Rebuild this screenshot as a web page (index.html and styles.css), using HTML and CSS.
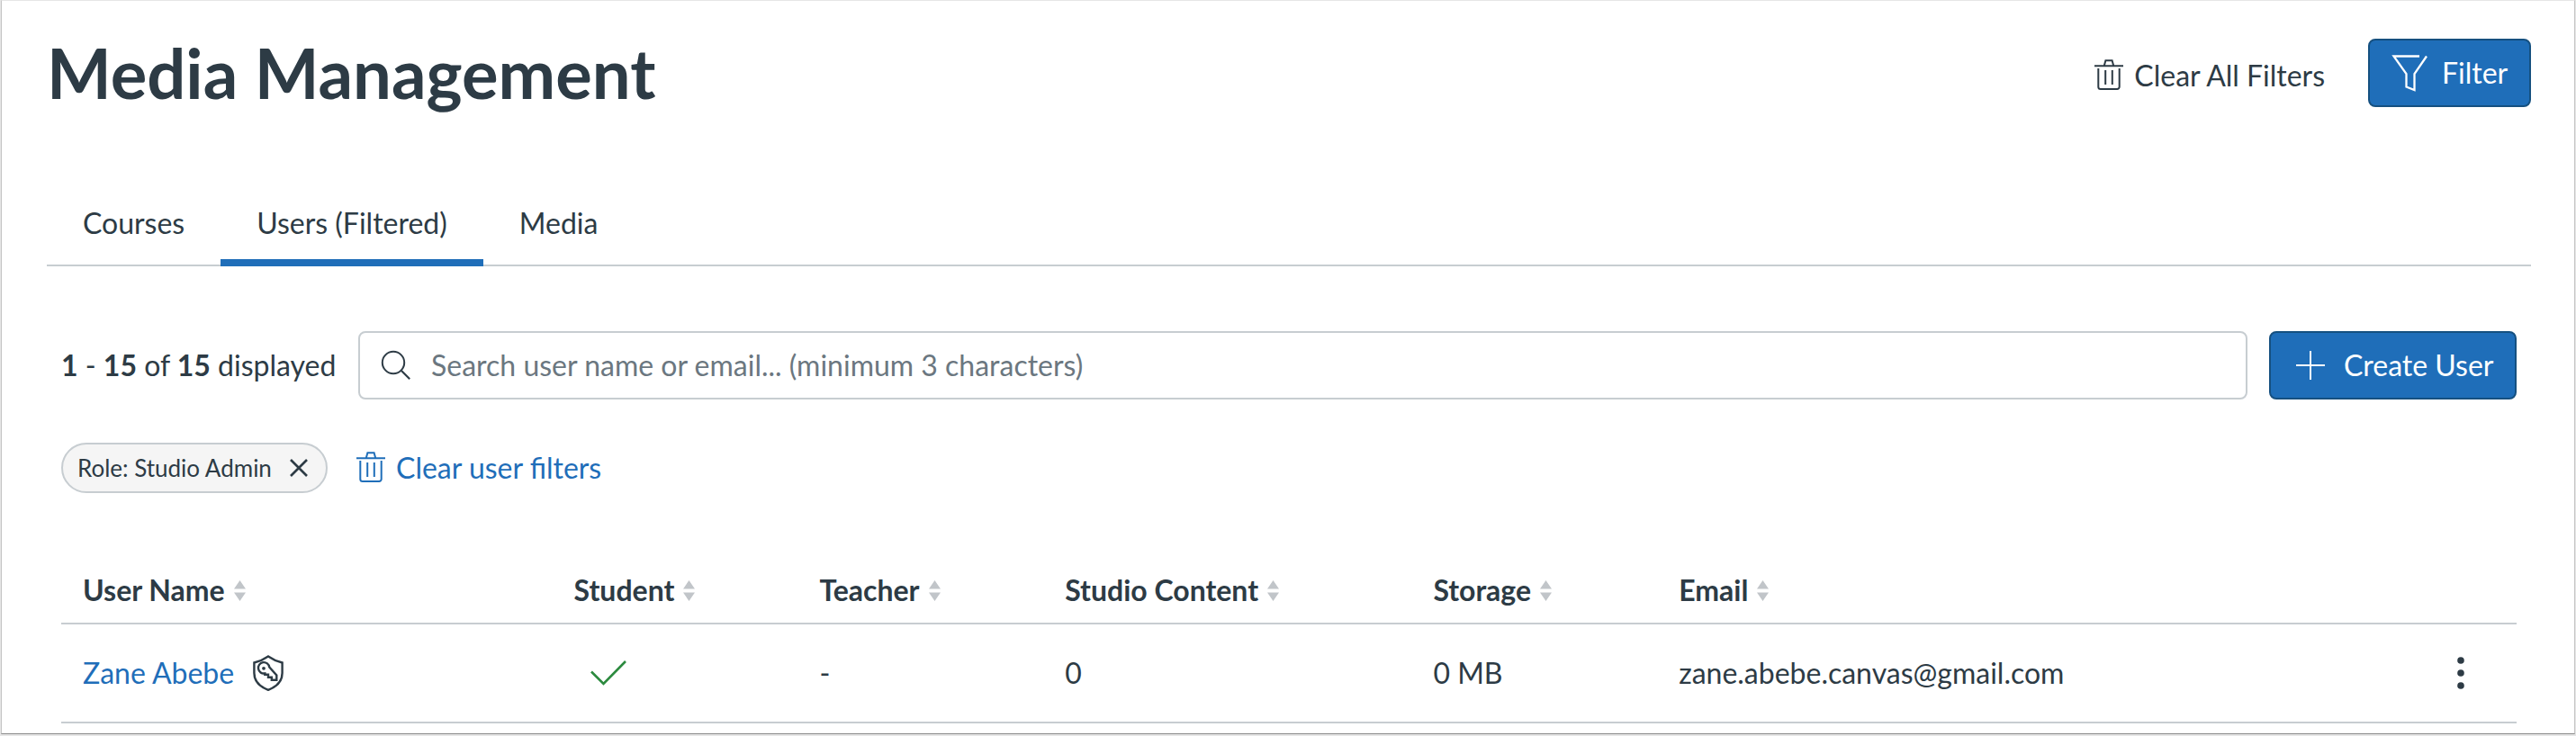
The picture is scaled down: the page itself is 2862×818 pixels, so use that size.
FILE: index.html
```
<!DOCTYPE html>
<html lang="en">
<head>
    <meta charset="UTF-8">
    <title>Media Management</title>
    <link rel="stylesheet" href="styles.css">
</head>
<body>
    <!-- shared icons -->
    <svg class="sprite">
        <symbol id="icon-trash" viewBox="0 0 32 34">
            <path d="M0 7.2h32M10.8 7l1.6-5.8h7.2L21.2 7M4.3 10v20.5a2.5 2.5 0 0 0 2.5 2.5h18.4a2.5 2.5 0 0 0 2.5-2.5V10M12.2 12v16M19.8 12v16" fill="none" stroke="currentColor" stroke-width="2"/>
        </symbol>
        <symbol id="icon-sort" viewBox="0 0 13 23">
            <path d="M6.5 0l6.500 9.500H0zM6.500 23l6.500-9.500H0z" fill="currentColor"/>
        </symbol>
    </svg>

    <div class="page">
        <header class="header">
            <h1>Media Management</h1>
            <div class="header-actions">
                <a class="clear-all"><svg class="trash"><use href="#icon-trash"/></svg>Clear All Filters</a>
                <button class="btn btn-filter">
                    <svg class="funnel" viewBox="0 0 40 43"><path d="M31 2.500H2.500L16.500 22v14.500l9 3.500V22L39 2.500" fill="none" stroke="currentColor" stroke-width="2.300"/></svg>
                    Filter
                </button>
            </div>
        </header>

        <nav class="tabs">
            <a class="tab">Courses</a>
            <a class="tab active">Users (Filtered)</a>
            <a class="tab">Media</a>
        </nav>

        <main class="content">
            <div class="toolbar">
                <div class="count"><b>1</b> - <b>15</b> of <b>15</b> displayed</div>
                <label class="search">
                    <svg class="magnifier" viewBox="0 0 32 32"><circle cx="13" cy="13" r="12.2" fill="none" stroke="currentColor" stroke-width="2"/><path d="M22 22l9.2 9.2" stroke="currentColor" stroke-width="2.2"/></svg>
                    <input type="text" placeholder="Search user name or email... (minimum 3 characters)">
                </label>
                <button class="btn btn-create">
                    <svg class="plus" viewBox="0 0 32 32"><path d="M0 16h32M16 0v32" stroke="currentColor" stroke-width="2"/></svg>
                    Create User
                </button>
            </div>

            <div class="filters">
                <span class="chip">Role: Studio Admin
                    <svg class="close" viewBox="0 0 20 20"><path d="M1 1l18 18M19 1L1 19" stroke="currentColor" stroke-width="2.6"/></svg>
                </span>
                <a class="clear-user"><svg class="trash"><use href="#icon-trash"/></svg>Clear user filters</a>
            </div>

            <table>
                <thead>
                    <tr>
                        <th class="col-name">User Name<svg class="sort"><use href="#icon-sort"/></svg></th>
                        <th class="col-s">Student<svg class="sort"><use href="#icon-sort"/></svg></th>
                        <th class="col-s">Teacher<svg class="sort"><use href="#icon-sort"/></svg></th>
                        <th class="col-m">Studio Content<svg class="sort"><use href="#icon-sort"/></svg></th>
                        <th class="col-s">Storage<svg class="sort"><use href="#icon-sort"/></svg></th>
                        <th>Email<svg class="sort"><use href="#icon-sort"/></svg></th>
                        <th class="col-menu"></th>
                    </tr>
                </thead>
                <tbody>
                    <tr>
                        <td>
                            <div class="user">
                                <a>Zane Abebe</a>
                                <svg class="shield" viewBox="0 0 34 40" fill="none" stroke="currentColor" stroke-width="2.4">
                                    <path d="M17 1.400C12.500 4.500 7 7.200 1.400 8.500V20C1.400 29 7 35 17 38.800C27 35 32.600 29 32.600 20V8.500C27 7.200 21.500 4.500 17 1.400Z"/>
                                    <path d="M18.300 13.500L26.300 22.500V27.800H20.800V24.800H17V21.800H13.300V20.400A6.200 6.200 0 1 1 18.300 13.500Z"/>
                                    <circle cx="12" cy="14.800" r="1.900" fill="currentColor" stroke="none"/>
                                </svg>
                            </div>
                        </td>
                        <td><svg class="check" viewBox="0 0 40 28"><path d="M1 12.500L14.500 26L39 1" fill="none" stroke="currentColor" stroke-width="2.600"/></svg></td>
                        <td>-</td>
                        <td>0</td>
                        <td>0 MB</td>
                        <td>zane.abebe.canvas@gmail.com</td>
                        <td class="menu"><svg class="dots" viewBox="0 0 8 36" fill="currentColor"><circle cx="4" cy="4" r="3.800"/><circle cx="4" cy="18" r="3.800"/><circle cx="4" cy="32" r="3.800"/></svg></td>
                    </tr>
                </tbody>
            </table>
        </main>
    </div>
</body>
</html>
```
FILE: styles.css
```
* {
    box-sizing: border-box;
}
body {
    margin: 0;
    height: 818px;
    overflow: hidden;
    background: #e6e6e6;
    color: #2d3b45;
    font-family: Lato, sans-serif;
    font-size: 32px;
    line-height: 48px;
}
svg {
    display: block;
    flex: none;
    overflow: visible;
}
.sprite {
    display: none;
}
.page {
    height: 816px;
    margin: 0 1px 0 1px;
    padding: 42px 48px 0 50px;
    background: #fff;
    border: 1px solid #c4c4c4;
    border-top-color: #e6e6e6;
    border-bottom-color: #8a8a8a;
}

/* header */
.header {
    display: flex;
    justify-content: space-between;
    height: 177px;
}
h1 {
    margin: -8px 0 0;
    font-size: 76px;
    line-height: 91px;
    font-weight: 700;
}
.header-actions {
    display: flex;
    align-items: flex-start;
    gap: 48px;
}
.clear-all {
    display: flex;
    gap: 12px;
    padding-top: 17px;
}
.trash {
    width: 32px;
    height: 34px;
    margin-top: 6px;
}
.btn {
    display: flex;
    align-items: center;
    height: 76px;
    border: 2px solid #155080;
    border-radius: 8px;
    background: #1f6eb9;
    color: #fff;
    font: inherit;
}
.btn-filter {
    width: 181px;
    padding: 0 0 0 24px;
    gap: 16px;
}
.funnel {
    width: 40px;
    height: 43px;
}

/* tabs */
.tabs {
    display: flex;
    height: 76px;
    border-bottom: 2px solid #c7cdd1;
}
.tab {
    height: 76px;
    padding: 4px 40px 0;
}
.tab.active {
    border-bottom: 8px solid #1f6eb9;
}

/* search row */
.content {
    padding: 72px 16px 0;
}
.toolbar {
    display: flex;
    align-items: center;
    gap: 24px;
}
.count {
    width: 306px;
    white-space: nowrap;
}
.search {
    flex: 1;
    display: flex;
    align-items: center;
    height: 76px;
    padding: 0 24px;
    gap: 23px;
    border: 2px solid #c7cdd1;
    border-radius: 8px;
}
.search input {
    flex: 1;
    padding: 0;
    border: 0;
    outline: 0;
    font: inherit;
}
.search input::placeholder {
    color: #6b7780;
}
.magnifier, .plus {
    width: 32px;
    height: 32px;
}
.btn-create {
    width: 275px;
    padding: 0 0 0 28px;
    gap: 21px;
}

/* active filters */
.filters {
    display: flex;
    align-items: center;
    gap: 32px;
    margin-top: 48px;
}
.chip {
    display: flex;
    align-items: center;
    justify-content: space-between;
    width: 296px;
    height: 56px;
    padding: 0 20px 0 16px;
    border: 2px solid #c7cdd1;
    border-radius: 28px;
    background: #f5f5f5;
    font-size: 26px;
    white-space: nowrap;
}
.close {
    width: 20px;
    height: 20px;
}
.clear-user {
    display: flex;
    gap: 12px;
    color: #1f6eb9;
}

/* table */
table {
    width: 100%;
    margin-top: 72px;
    border-collapse: separate;
    border-spacing: 0;
    table-layout: fixed;
}
th, td {
    padding: 0 24px;
    text-align: left;
    border-bottom: 2px solid #c7cdd1;
}
th {
    height: 74px;
    font-weight: 700;
}
td {
    height: 110px;
}
.col-name {
    width: 20%;
}
.col-s {
    width: 10%;
}
.col-m {
    width: 15%;
}
.col-menu {
    width: 5%;
}
.sort {
    display: inline-block;
    width: 13px;
    height: 23px;
    margin-left: 10px;
    color: #c1c5c9;
}
.user {
    display: flex;
    align-items: center;
    gap: 21px;
}
.user a {
    color: #1f6eb9;
}
.shield {
    width: 34px;
    height: 40px;
}
.check {
    width: 40px;
    height: 28px;
    margin-left: 18px;
    color: #2b8a3e;
}
.menu {
    padding: 0 58px 0 0;
}
.dots {
    width: 8px;
    height: 36px;
    margin-left: auto;
}
```
